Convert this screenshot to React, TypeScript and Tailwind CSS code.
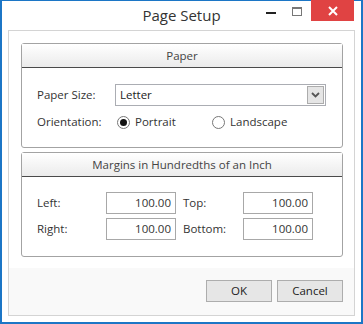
import { useState } from "react";

const font = { fontFamily: '"Open Sans", "Noto Sans", Arial, sans-serif' };

function GroupBox({ title, children }: { title: string; children: React.ReactNode }) {
  return (
    <div className="flex flex-col rounded-[3px] border border-[#a3a3a3] bg-white">
      <div className="flex h-[24px] items-center justify-center border-b border-[#4a4a4a] bg-gradient-to-b from-white to-[#ebebeb] text-[11.5px] text-[#444]">
        {title}
      </div>
      {children}
    </div>
  );
}

function Radio({ checked, label, onClick }: { checked: boolean; label: string; onClick: () => void }) {
  return (
    <button type="button" onClick={onClick} className="flex items-center gap-[5px] text-[11.5px] text-[#333]">
      <span className="flex h-[13px] w-[13px] items-center justify-center rounded-full border border-[#777] bg-white">
        {checked && <span className="h-[7px] w-[7px] rounded-full bg-[#111]" />}
      </span>
      {label}
    </button>
  );
}

function NumberBox({ value }: { value: string }) {
  return (
    <div className="flex h-[22px] w-[70px] items-center justify-end border border-[#a8a8a8] bg-white pr-[4px] text-[11.5px] text-[#333]">
      {value}
    </div>
  );
}

function DialogButton({ label }: { label: string }) {
  return (
    <button
      type="button"
      className="flex h-[22px] w-[66px] items-center justify-center border border-[#adadad] bg-[#e6e6e6] text-[11.5px] text-[#222]"
    >
      {label}
    </button>
  );
}

export default function App() {
  const [portrait, setPortrait] = useState(true);

  return (
    <div
      style={font}
      className="flex h-[324px] w-[363px] flex-col border-x-2 border-b-2 border-t border-[#1c76c6] bg-white"
    >
      {/* title bar */}
      <div className="grid h-[29px] shrink-0 grid-cols-[1fr_auto_1fr]">
        <div />
        <div className="pt-[3px] text-[15px] text-[#333]">Page Setup</div>
        <div className="flex items-start justify-end pr-[7px]">
          <button type="button" className="mt-[11px] mr-[16px] h-[2px] w-[10px] bg-[#222]" aria-label="Minimize" />
          <button
            type="button"
            className="mt-[6px] mr-[9px] h-[9px] w-[10px] border border-t-2 border-[#777]"
            aria-label="Maximize"
          />
          <button
            type="button"
            className="-mt-px flex h-[21px] w-[43px] items-center justify-center bg-[#e04343]"
            aria-label="Close"
          >
            <svg width="10" height="10" viewBox="0 0 10 10">
              <path d="M1 1L9 9M9 1L1 9" stroke="white" strokeWidth="2" />
            </svg>
          </button>
        </div>
      </div>

      {/* content frame */}
      <div className="mx-[6px] mb-[6px] flex flex-1 flex-col border border-[#d4d4d4]">
        <div className="flex flex-col gap-[4px] pb-[11px] pl-[12px] pr-[11px] pt-[12px]">
          <GroupBox title="Paper">
            <div className="flex flex-col gap-[5px] pb-[14px] pl-[15px] pr-[16px] pt-[16px]">
              <div className="flex items-center">
                <span className="w-[78px] text-[11.5px] text-[#333]">Paper Size:</span>
                <div className="flex h-[22px] flex-1 items-center justify-between border border-[#abadb3] bg-white pl-[4px] pr-px text-[11.5px] text-[#222]">
                  Letter
                  <span className="flex h-[18px] w-[17px] items-center justify-center border border-[#acacac] bg-[#e5e5e5]">
                    <svg width="9" height="6" viewBox="0 0 9 6">
                      <path d="M1 1L4.5 4.5L8 1" fill="none" stroke="#555" strokeWidth="1.8" />
                    </svg>
                  </span>
                </div>
              </div>
              <div className="flex h-[22px] items-center">
                <span className="w-[80px] text-[11.5px] text-[#333]">Orientation:</span>
                <div className="w-[95px]">
                  <Radio checked={portrait} label="Portrait" onClick={() => setPortrait(true)} />
                </div>
                <Radio checked={!portrait} label="Landscape" onClick={() => setPortrait(false)} />
              </div>
            </div>
          </GroupBox>

          <GroupBox title="Margins in Hundredths of an Inch">
            <div className="grid grid-cols-[69px_70px_67px_70px] items-center gap-y-[4px] pb-[16px] pl-[15px] pt-[15px] text-[11.5px] text-[#333]">
              <span>Left:</span>
              <NumberBox value="100.00" />
              <span className="pl-[7px]">Top:</span>
              <NumberBox value="100.00" />
              <span>Right:</span>
              <NumberBox value="100.00" />
              <span className="pl-[7px]">Bottom:</span>
              <NumberBox value="100.00" />
            </div>
          </GroupBox>
        </div>

        <div className="flex flex-1 items-start justify-end gap-[5px] bg-[#f9f9f9] pr-[11px] pt-[12px]">
          <DialogButton label="OK" />
          <DialogButton label="Cancel" />
        </div>
      </div>
    </div>
  );
}
